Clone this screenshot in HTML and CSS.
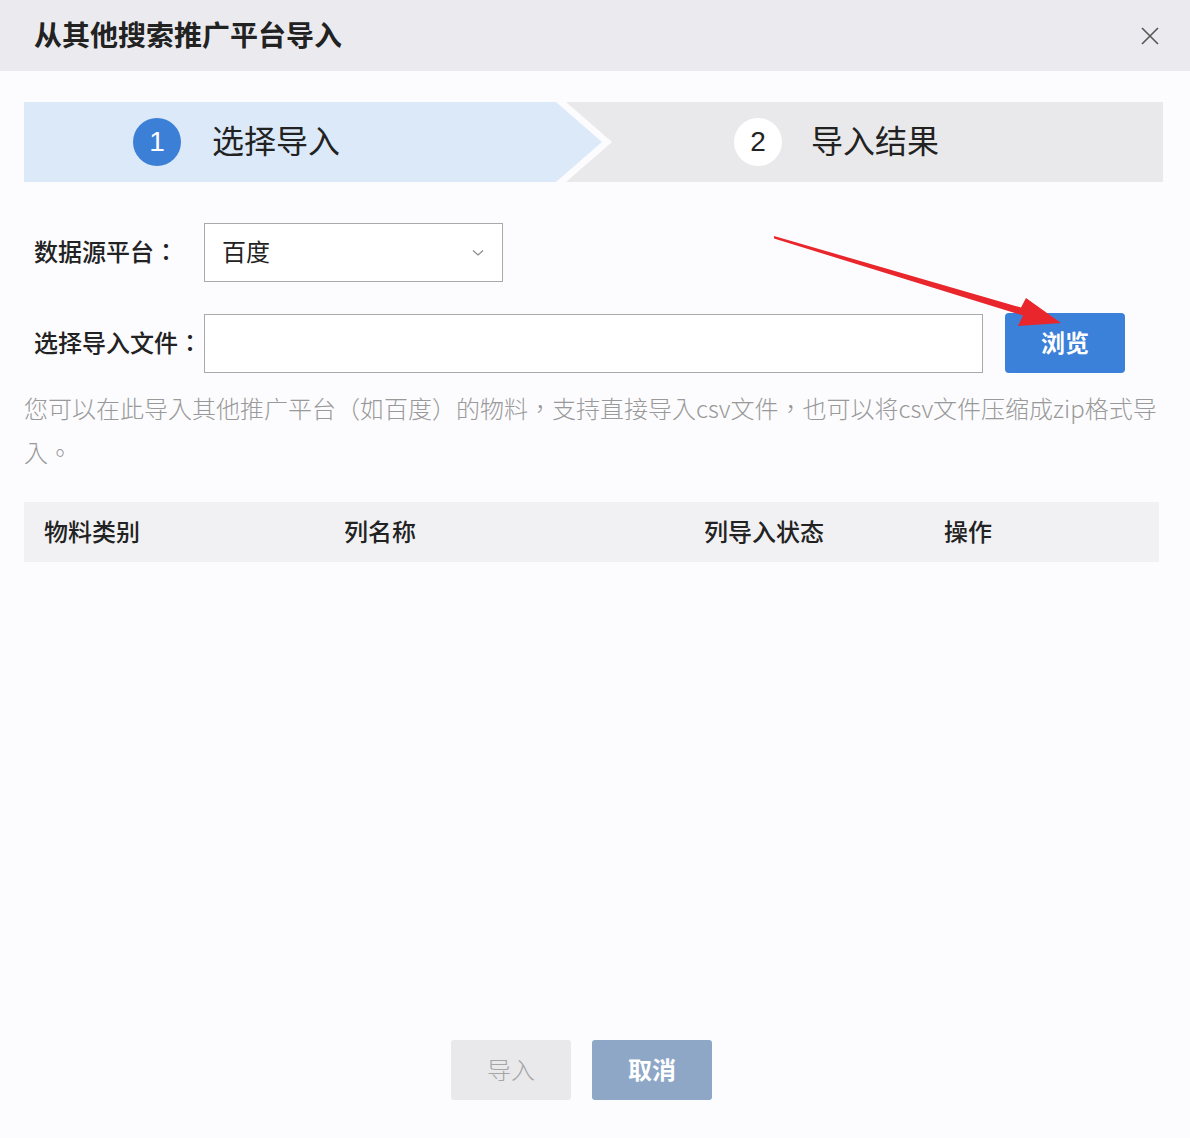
FILE: index.html
```html
<!DOCTYPE html>
<html lang="zh-CN">
<head>
    <meta charset="UTF-8">
    <title>从其他搜索推广平台导入</title>
    <link rel="stylesheet" href="styles.css">
</head>
<body>
    <div class="dialog">
        <div class="dialog-header">
            <h1>从其他搜索推广平台导入</h1>
            <svg class="close-icon" width="20" height="20" viewBox="0 0 20 20">
                <path d="M2 2 L18 18 M18 2 L2 18" stroke="#555" stroke-width="1.6" fill="none"/>
            </svg>
        </div>

        <div class="dialog-body">
            <div class="steps">
                <div class="step-edge">
                    <div class="step step-active">
                        <span class="step-num">1</span>
                        <span class="step-text">选择导入</span>
                    </div>
                </div>
                <div class="step step-next">
                    <span class="step-num">2</span>
                    <span class="step-text">导入结果</span>
                </div>
            </div>

            <div class="form-row">
                <label class="form-label">数据源平台<span class="punct" lang="zh-TW">：</span></label>
                <div class="select-box">
                    <span>百度</span>
                    <svg width="12" height="8" viewBox="0 0 12 8">
                        <path d="M1 1.5 L6 6 L11 1.5" stroke="#888" stroke-width="1.1" fill="none"/>
                    </svg>
                </div>
            </div>

            <div class="form-row">
                <label class="form-label">选择导入文件<span class="punct" lang="zh-TW">：</span></label>
                <div class="file-input"></div>
                <button type="button" class="btn-browse">浏览</button>
            </div>

            <!-- centred punctuation as in the original, so this paragraph uses the TC face -->
            <p class="hint" lang="zh-TW">您可以在此导入其他推广平台（如百度）的物料，支持直接导入csv文件，也可以将csv文件压缩成zip格式导入。</p>

            <div class="table-head">
                <div class="col col-type">物料类别</div>
                <div class="col col-name">列名称</div>
                <div class="col col-status">列导入状态</div>
                <div class="col col-op">操作</div>
            </div>
        </div>

        <div class="dialog-footer">
            <button type="button" class="btn-import">导入</button>
            <button type="button" class="btn-cancel">取消</button>
        </div>
    </div>

    <!-- red annotation arrow pointing at the browse button -->
    <svg class="annot-arrow" width="1190" height="1138" viewBox="0 0 1190 1138">
        <polygon fill="#e8262b" points="774,236 1021,307.5 1026,298 1061,323 1018,326 1023,315.5 774,238.5"/>
    </svg>
</body>
</html>
```

FILE: styles.css
```css
body {
    margin: 0;
    padding: 0;
    background-color: #fcfcfe;
    font-family: "Noto Sans CJK SC", "Noto Sans", sans-serif;
    color: #222;
}
.dialog {
    display: flex;
    flex-direction: column;
    min-height: 100vh;
}
.dialog-header {
    height: 71px;
    box-sizing: border-box;
    background-color: #ebebef;
    display: flex;
    align-items: center;
    justify-content: space-between;
    padding: 0 30px 4px 34px;
}
.dialog-header h1 {
    margin: 0;
    font-size: 28px;
    font-weight: 700;
    color: #222;
}
.close-icon {
    display: block;
    margin-top: 4px;
}
.punct {
    font-family: "Noto Sans CJK TC", "Noto Sans CJK SC", sans-serif;
}
.dialog-body {
    padding: 31px 27px 0 24px;
}
.steps {
    display: flex;
    height: 80px;
    background-color: #e9e9eb;
}
.step-edge {
    width: 588px;
    background-color: #fcfcfe;
    clip-path: polygon(0 0, 542px 0, 100% 50%, 542px 100%, 0 100%);
}
.step {
    display: flex;
    align-items: center;
    height: 80px;
}
.step-active {
    width: 578px;
    box-sizing: border-box;
    padding-left: 109px;
    background-color: #dce9f9;
    clip-path: polygon(0 0, 532px 0, 100% 50%, 532px 100%, 0 100%);
}
.step-next {
    padding-left: 122px;
}
.step-num {
    width: 48px;
    height: 48px;
    border-radius: 50%;
    display: flex;
    align-items: center;
    justify-content: center;
    font-family: "Liberation Sans", Arial, sans-serif;
    font-size: 28px;
    background-color: #fff;
    color: #222;
}
.step-active .step-num {
    background-color: #3c7fd7;
    color: #fff;
}
.step-text {
    margin-left: 31px;
    padding-bottom: 6px;
    font-size: 32px;
    color: #222;
}
.step-next .step-text {
    margin-left: 29px;
}
.form-row {
    display: flex;
    align-items: center;
    padding-left: 10px;
    margin-top: 41px;
}
.form-row + .form-row {
    margin-top: 31px;
}
.form-label {
    width: 170px;
    padding-bottom: 4px;
    font-size: 24px;
    font-weight: 500;
    color: #222;
}
.select-box {
    width: 299px;
    height: 59px;
    box-sizing: border-box;
    border: 1px solid #a9a9a9;
    background-color: #fff;
    display: flex;
    align-items: center;
    justify-content: space-between;
    padding: 0 18px 4px 17px;
    font-size: 24px;
}
.select-box svg {
    margin-top: 4px;
}
.file-input {
    width: 779px;
    height: 59px;
    box-sizing: border-box;
    border: 1px solid #a9a9a9;
    background-color: #fff;
}
.btn-browse {
    margin-left: 22px;
    width: 120px;
    height: 60px;
    padding-bottom: 4px;
    border: none;
    border-radius: 4px;
    background-color: #3b80d9;
    color: #fff;
    font-family: inherit;
    font-size: 24px;
    font-weight: 700;
}
.hint {
    margin: 13px 0 0 0;
    font-family: "Noto Sans CJK TC", "Noto Sans CJK SC", sans-serif;
    font-size: 24px;
    font-weight: 300;
    line-height: 44px;
    color: #999;
}
.table-head {
    display: flex;
    align-items: center;
    height: 60px;
    box-sizing: border-box;
    padding-bottom: 4px;
    margin-top: 28px;
    margin-right: 4px;
    background-color: #f1f1f3;
    font-size: 24px;
    font-weight: 500;
}
.col {
    box-sizing: border-box;
    padding-left: 20px;
}
.col-type { width: 300px; }
.col-name { width: 360px; }
.col-status { width: 240px; }
.col-op { flex: 1; }
.dialog-footer {
    margin-top: auto;
    display: flex;
    justify-content: center;
    gap: 21px;
    padding: 0 27px 38px 0;
}
.dialog-footer button {
    width: 120px;
    height: 60px;
    padding-bottom: 4px;
    border: none;
    border-radius: 3px;
    font-family: inherit;
    font-size: 24px;
}
.btn-import {
    background-color: #e9e9eb;
    color: #a5a5a5;
    font-weight: 300;
}
.btn-cancel {
    background-color: #8ea7c6;
    color: #fff;
    font-weight: 700;
}
.annot-arrow {
    position: absolute;
    top: 0;
    left: 0;
    pointer-events: none;
}
```
